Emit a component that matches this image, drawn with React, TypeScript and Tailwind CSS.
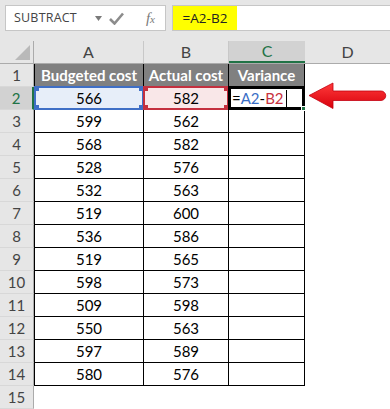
import React from "react";

const budgeted = [566, 599, 568, 528, 532, 519, 536, 519, 598, 509, 550, 597, 580];
const actual = [582, 562, 582, 576, 563, 600, 586, 565, 573, 598, 563, 589, 576];

const font = { fontFamily: "Lato, 'Open Sans', sans-serif" };

function Handles({ color }: { color: string }) {
  // little corner squares of a referenced range
  const sq = "absolute w-[5px] h-[5px]";
  return (
    <>
      <div className={`${sq} -left-[2px] -top-[2px] ${color}`} />
      <div className={`${sq} -right-[2px] -top-[2px] ${color}`} />
      <div className={`${sq} -left-[2px] -bottom-[2px] ${color}`} />
      <div className={`${sq} -right-[2px] -bottom-[2px] ${color}`} />
    </>
  );
}

function RowHead({ n, active }: { n: number; active?: boolean }) {
  return (
    <div
      className={
        "w-[34px] h-[23px] shrink-0 flex items-center justify-center text-[15px] border-b border-[#d8d8d8] " +
        (active
          ? "bg-[#d2d2d2] text-[#217346] border-r-2 border-r-[#217346]"
          : "bg-[#e6e6e6] text-[#444] border-r border-r-[#ababab]")
      }
    >
      {n}
    </div>
  );
}

export default function App() {
  return (
    <div className="w-[390px] h-[409px] bg-white overflow-hidden relative select-none" style={font}>
      {/* formula bar */}
      <div className="h-[41px] bg-[#e6e6e6] flex items-start pt-[5px] pl-[5px] gap-[6px]">
        <div className="w-[161px] h-[26px] bg-white border border-[#c6c6c6] flex items-center pl-[8px]">
          <span className="text-[12.5px] text-[#444] tracking-[0.2px]" style={{ fontFamily: "'Open Sans', sans-serif" }}>
            SUBTRACT
          </span>
          <svg className="ml-[18px]" width="7" height="5" viewBox="0 0 7 5">
            <path d="M0 0 L7 0 L3.5 5 Z" fill="#7a7a7a" />
          </svg>
          <svg className="ml-[7px]" width="15" height="13" viewBox="0 0 15 13">
            <path d="M1 7 L5.5 11.5 L14 1.5" fill="none" stroke="#8c8c8c" strokeWidth="2.6" />
          </svg>
          <span
            className="ml-[22px] text-[15px] text-[#7a7a7a] italic"
            style={{ fontFamily: "'Liberation Serif', serif" }}
          >
            f<span className="text-[11px]">x</span>
          </span>
        </div>
        <div className="flex-1 h-[26px] bg-white border border-[#c6c6c6] border-r-0 flex items-stretch">
          <div
            className="w-[64px] bg-[#ffff00] flex items-center justify-center text-[13.5px] text-[#222]"
            style={{ fontFamily: "'Open Sans', sans-serif" }}
          >
            =A2-B2
          </div>
        </div>
      </div>

      {/* column headers */}
      <div className="flex h-[23px] bg-[#e6e6e6] border-b border-[#ababab] text-[16px] text-[#444]">
        <div className="w-[34px] shrink-0 border-r border-[#ababab] relative">
          <svg className="absolute right-[3px] bottom-[3px]" width="15" height="15" viewBox="0 0 15 15">
            <path d="M15 0 L15 15 L0 15 Z" fill="#b9b9b9" />
          </svg>
        </div>
        <div className="w-[110px] shrink-0 border-r border-[#c8c8c8] flex items-center justify-center">A</div>
        <div className="w-[85px] shrink-0 border-r border-[#c8c8c8] flex items-center justify-center">B</div>
        <div className="w-[76px] shrink-0 bg-[#d2d2d2] border-b-2 border-[#217346] text-[#217346] flex items-center justify-center">
          C
        </div>
        <div className="flex-1 flex items-center justify-center">D</div>
      </div>

      {/* row 1: headings */}
      <div className="flex">
        <RowHead n={1} />
        <div className="w-[110px] h-[23px] bg-[#808080] border-x border-b border-black flex items-center justify-center text-white font-bold text-[15px]">
          Budgeted cost
        </div>
        <div className="w-[85px] h-[23px] bg-[#808080] border-r border-b border-black flex items-center justify-center text-white font-bold text-[15px]">
          Actual cost
        </div>
        <div className="w-[76px] h-[23px] bg-[#808080] border-r border-b border-black flex items-center justify-center text-white font-bold text-[15px]">
          Variance
        </div>
      </div>

      {budgeted.map((a, i) => {
        const row = i + 2;
        const first = i === 0;
        return (
          <div key={row} className="flex text-[15px] text-black">
            <RowHead n={row} active={first} />
            <div
              className={
                "relative w-[110px] h-[23px] border-x border-b border-black flex items-center justify-center " +
                (first ? "bg-[#e7eef9]" : "")
              }
            >
              {first && (
                <div className="absolute -left-[1px] -top-[1px] -right-[1px] -bottom-[1px] border-2 border-[#3f6fc6]">
                  <Handles color="bg-[#3f6fc6]" />
                </div>
              )}
              <span className="relative">{a}</span>
            </div>
            <div
              className={
                "relative w-[85px] h-[23px] border-r border-b border-black flex items-center justify-center " +
                (first ? "bg-[#f9e7e8]" : "")
              }
            >
              {first && (
                <div className="absolute -left-[1px] -top-[1px] -right-[1px] -bottom-[1px] border-2 border-[#c4303f] z-10">
                  <Handles color="bg-[#c4303f]" />
                </div>
              )}
              <span className="relative">{actual[i]}</span>
            </div>
            <div className="relative w-[76px] h-[23px] border-r border-b border-black flex items-center">
              {first && (
                <div className="absolute -left-[1px] -top-[1px] -right-[1px] -bottom-[1px] border-[3px] border-black z-20 flex items-center pl-[1px]">
                  <span className="text-[15px]">
                    =<span className="text-[#3a6ec6]">A2</span>-<span className="text-[#c8323f]">B2</span>
                  </span>
                  <span className="ml-[2px] w-px h-[17px] bg-black" />
                  <div className="absolute -right-[4px] -bottom-[4px] w-[5px] h-[5px] bg-[#217346] border border-white" />
                </div>
              )}
            </div>
          </div>
        );
      })}

      {/* row 15 */}
      <div className="flex">
        <RowHead n={15} />
      </div>

      {/* red arrow pointing at C2 */}
      <svg className="absolute left-[308px] top-[82px]" width="80" height="28" viewBox="0 0 80 28">
        <defs>
          <linearGradient id="arr" x1="0" y1="0" x2="0" y2="1">
            <stop offset="0" stopColor="#ff3b3b" />
            <stop offset="1" stopColor="#d8000c" />
          </linearGradient>
        </defs>
        <path
          d="M1 13.5 L25 1 L25 9 L73 9 A4.75 4.75 0 0 1 73 18.5 L25 18.5 L25 26.5 Z"
          fill="url(#arr)"
          stroke="#c40010"
          strokeWidth="0.8"
          strokeLinejoin="round"
        />
      </svg>
    </div>
  );
}
